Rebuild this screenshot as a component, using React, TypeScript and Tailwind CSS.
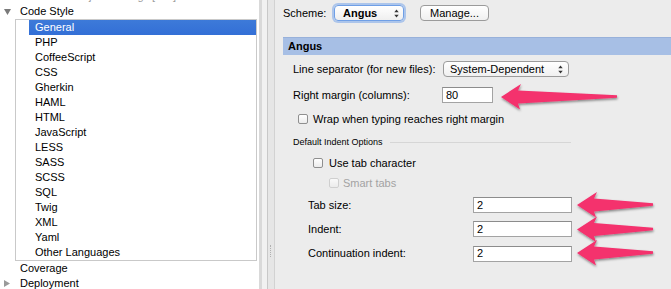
import React from "react";

const items = [
  "General",
  "PHP",
  "CoffeeScript",
  "CSS",
  "Gherkin",
  "HAML",
  "HTML",
  "JavaScript",
  "LESS",
  "SASS",
  "SCSS",
  "SQL",
  "Twig",
  "XML",
  "Yaml",
  "Other Languages",
];

function UpDown() {
  return (
    <svg width="5" height="9" viewBox="0 0 5 9" className="block">
      <path d="M2.5 0.5 L4.7 3.3 L0.3 3.3 Z" fill="#333" />
      <path d="M2.5 8.5 L4.7 5.7 L0.3 5.7 Z" fill="#333" />
    </svg>
  );
}

function Checkbox({ disabled }: { disabled?: boolean }) {
  return (
    <div
      className={
        "w-[10px] h-[10px] rounded-[2px] border bg-gradient-to-b from-white to-[#ececec] " +
        (disabled ? "border-[#c4c4c4] opacity-70" : "border-[#8f8f8f]")
      }
    />
  );
}

function Input({ value, w }: { value: string; w: string }) {
  return (
    <div
      className={
        "h-[16px] bg-white border border-[#a3a3a3] border-t-[#8c8c8c] flex items-center pl-[3px] text-black " +
        w
      }
    >
      {value}
    </div>
  );
}

function Arrow({ tip, y, len, head }: { tip: number; y: number; len: number; head: number }) {
  const hx = tip + head;
  const tail = tip + len;
  const pts = [
    [tip, y],
    [hx, y - 13],
    [hx - 3, y - 6.5],
    [tail, y - 1.8],
    [tail, y + 0.8],
    [hx - 3, y + 6.5],
    [hx - 1, y + 12.5],
  ]
    .map((p) => p.join(","))
    .join(" ");
  return <polygon points={pts} fill="#f4306d" filter="url(#sh)" />;
}

export default function App() {
  return (
    <div
      className="relative w-[671px] h-[289px] overflow-hidden flex bg-[#ececec] text-[11px] leading-none text-black"
      style={{ fontFamily: '"Liberation Sans", Arial, sans-serif' }}
    >
      {/* Left tree */}
      <div className="w-[259px] h-full bg-white overflow-hidden">
        <div className="-mt-[11px] flex flex-col">
          <div className="h-[15px] flex items-center pl-[72px] text-[#9b9b9b]">
            Project Settings [ahk]
          </div>
          <div className="h-[15px] flex items-center">
            <svg width="7" height="6" viewBox="0 0 7 6" className="ml-[4px] mr-[9px]">
              <path d="M0 0 L7 0 L3.5 6 Z" fill="#7a7a7a" />
            </svg>
            <span>Code Style</span>
          </div>
          <div className="ml-[15px] w-[242px] border border-[#c9c9c9] bg-white flex flex-col">
            {items.map((it, i) => (
              <div
                key={it}
                className={
                  "ml-[13px] pl-[6px] h-[15px] flex items-center " +
                  (i === 0 ? "bg-gradient-to-b from-[#3d7ad9] to-[#336fd6] text-white" : "")
                }
              >
                {it}
              </div>
            ))}
          </div>
          <div className="h-[15px] flex items-center pl-[20px]">Coverage</div>
          <div className="h-[15px] flex items-center">
            <svg width="6" height="7" viewBox="0 0 6 7" className="ml-[4px] mr-[10px]">
              <path d="M0 0 L6 3.5 L0 7 Z" fill="#9a9a9a" />
            </svg>
            <span>Deployment</span>
          </div>
        </div>
      </div>

      {/* splitter stripes */}
      <div className="w-[3px] h-full bg-[#d9d9d9]" />
      <div className="w-[5px] h-full bg-[#f1f1f1]" />
      <div className="w-[1px] h-full bg-[#c8c8c8]" />
      <div className="w-[6px] h-full bg-[#e6e6e6] flex flex-col justify-end items-center pb-[32px]">
        <div className="w-[2px] h-[12px] border-l border-dotted border-[#b0b0b0]" />
      </div>
      <div className="w-[1px] h-full bg-[#d2d2d2]" />

      {/* Right panel */}
      <div className="flex-1 h-full flex flex-col pl-[8px]">
        {/* Scheme row */}
        <div className="mt-[5px] h-[16px] flex items-center">
          <span className="w-[51px]">Scheme:</span>
          <div className="w-[70px] h-[16px] rounded-[4px] border border-[#6f9fe6] shadow-[0_0_0_2px_rgba(120,165,235,0.55)] bg-gradient-to-b from-white to-[#efefef] flex items-center pl-[8px] pr-[4px] justify-between">
            <span className="font-bold">Angus</span>
            <UpDown />
          </div>
          <div className="ml-[16px] w-[69px] h-[16px] rounded-[4px] border border-[#9b9b9b] bg-gradient-to-b from-white to-[#f0f0f0] flex items-center justify-center">
            Manage...
          </div>
        </div>

        {/* Header */}
        <div className="mt-[16px] h-[18px] bg-[#a7bfe5] border-t border-[#98b1da] flex items-center pl-[5px] font-bold">
          Angus
        </div>

        <div className="pl-[10px] flex flex-col">
          {/* Line separator */}
          <div className="mt-[6px] h-[16px] flex items-center">
            <span className="w-[150px]">Line separator (for new files):</span>
            <div className="w-[126px] h-[16px] rounded-[4px] border border-[#9b9b9b] bg-gradient-to-b from-white to-[#f0f0f0] flex items-center pl-[6px] pr-[5px] justify-between">
              <span>System-Dependent</span>
              <UpDown />
            </div>
          </div>

          {/* Right margin */}
          <div className="mt-[10px] h-[16px] flex items-center">
            <span className="w-[149px]">Right margin (columns):</span>
            <Input value="80" w="w-[51px]" />
          </div>

          {/* Wrap */}
          <div className="mt-[10px] h-[12px] flex items-center pl-[5px]">
            <Checkbox />
            <span className="ml-[5px]">Wrap when typing reaches right margin</span>
          </div>

          {/* Default Indent Options */}
          <div className="mt-[11px] h-[12px] flex items-center">
            <span className="text-[9px] w-[97px]">Default Indent Options</span>
            <div className="w-[181px] h-[1px] bg-[#d6d6d6]" />
          </div>

          {/* Use tab */}
          <div className="mt-[9px] h-[12px] flex items-center pl-[20px]">
            <Checkbox />
            <span className="ml-[6px]">Use tab character</span>
          </div>

          {/* Smart tabs */}
          <div className="mt-[8px] h-[12px] flex items-center pl-[36px]">
            <Checkbox disabled />
            <span className="ml-[4px] text-[#a3a3a3]">Smart tabs</span>
          </div>

          {/* Tab size */}
          <div className="mt-[8px] h-[16px] flex items-center pl-[15px]">
            <span className="w-[165px]">Tab size:</span>
            <Input value="2" w="w-[99px]" />
          </div>
          <div className="mt-[8px] h-[16px] flex items-center pl-[15px]">
            <span className="w-[165px]">Indent:</span>
            <Input value="2" w="w-[99px]" />
          </div>
          <div className="mt-[8px] h-[17px] flex items-center pl-[15px]">
            <span className="w-[165px]">Continuation indent:</span>
            <Input value="2" w="w-[99px]" />
          </div>
        </div>
      </div>

      {/* Annotation arrows */}
      <svg
        className="absolute inset-0 pointer-events-none"
        width="671"
        height="289"
        viewBox="0 0 671 289"
      >
        <defs>
          <filter id="sh" x="-20%" y="-50%" width="140%" height="200%">
            <feDropShadow dx="0.5" dy="1.5" stdDeviation="1.2" floodColor="#000" floodOpacity="0.45" />
          </filter>
        </defs>
        <Arrow tip={501} y={97} len={116} head={20} />
        <Arrow tip={577} y={205} len={76} head={20} />
        <Arrow tip={577} y={229.5} len={76} head={20} />
        <Arrow tip={577} y={253} len={76} head={20} />
      </svg>
    </div>
  );
}
